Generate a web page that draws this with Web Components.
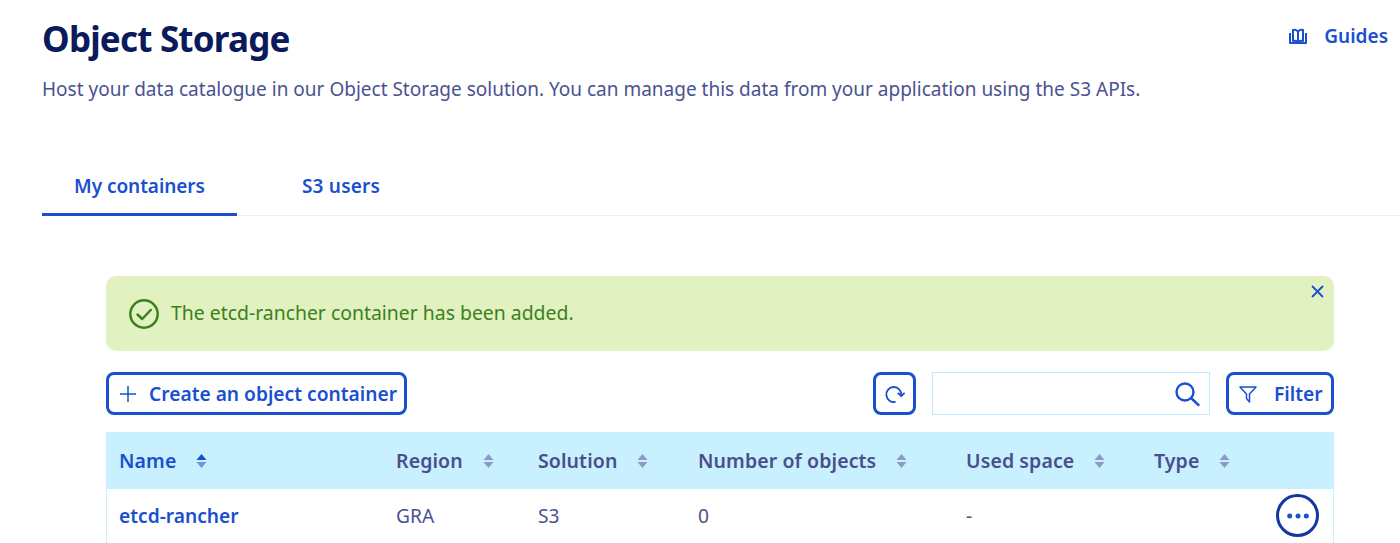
<!DOCTYPE html>
<html lang="en">
<head>
<meta charset="utf-8">
<title>Object Storage</title>
<style>
  html, body { margin: 0; height: 543px; overflow: hidden; background: #fff; }
  body { font-family: "Noto Sans", "Open Sans", sans-serif; color: #4d5693; }
</style>
</head>
<body>
<page-header heading="Object Storage">Host your data catalogue in our Object Storage solution. You can manage this data from your application using the S3 APIs.</page-header>
<tab-bar></tab-bar>
<main-panel>
  <success-message>The etcd-rancher container has been added.</success-message>
  <container-toolbar></container-toolbar>
  <container-table></container-table>
</main-panel>

<script>
const BLUE = '#1a4fd0';

class PageHeader extends HTMLElement {
  constructor() {
    super();
    this.shadowDOM = this.attachShadow({ mode: 'open' });
  }

  connectedCallback() {
    this.shadowDOM.innerHTML = `
      <style>
        :host { display: block; padding: 14px 12px 0 42px; height: 102px; box-sizing: border-box; }
        .top { display: flex; justify-content: space-between; align-items: flex-start; height: 49px; }
        h1 { margin: 0; font-size: 35px; line-height: 49px; font-weight: 700; color: #0a1a5c; letter-spacing: -0.8px; }
        a { display: flex; align-items: center; gap: 17px; color: ${BLUE}; font-size: 19px; font-weight: 600; line-height: 44px; }
        svg { width: 18px; height: 16px; }
        p { margin: 13px 0 0; font-size: 19px; line-height: 26px; color: #4a5290; }
      </style>
      <div class="top">
        <h1>${this.getAttribute('heading')}</h1>
        <a>
          <svg viewBox="0 0 18 16" fill="none" stroke="${BLUE}" stroke-width="2" stroke-linejoin="round">
            <path d="M1 5v10h16V5"/>
            <path d="M4 2c1.800-.6 3.400 0 5 1.500C10.600 2 12.200 1.400 14 2v11c-1.800-.4-3.400 0-5 1-1.600-1-3.200-1.400-5-1z"/>
            <path d="M9 3.500V14"/>
          </svg>
          Guides
        </a>
      </div>
      <p><slot></slot></p>`;
  }
}
customElements.define('page-header', PageHeader);

class TabBar extends HTMLElement {
  constructor() {
    super();
    this.shadowDOM = this.attachShadow({ mode: 'open' });
  }

  connectedCallback() {
    this.shadowDOM.innerHTML = `
      <style>
        :host { display: flex; margin: 54px 0 0 42px; height: 60px; box-sizing: border-box; border-bottom: 1px solid #e3f3fb; }
        div { box-sizing: border-box; height: 60px; padding-top: 17px; font-size: 19px; line-height: 26px; font-weight: 600; color: ${BLUE}; text-align: center; }
        .on { width: 195px; border-bottom: 3px solid ${BLUE}; letter-spacing: -0.05px; }
        .off { width: 208px; letter-spacing: 0.2px; }
      </style>
      <div class="on">My containers</div>
      <div class="off">S3 users</div>`;
  }
}
customElements.define('tab-bar', TabBar);

class MainPanel extends HTMLElement {
  constructor() {
    super();
    this.attachShadow({ mode: 'open' }).innerHTML = `
      <style>
        :host { display: flex; flex-direction: column; margin: 60px 66px 0 106px; }
      </style>
      <slot></slot>`;
  }
}
customElements.define('main-panel', MainPanel);

class SuccessMessage extends HTMLElement {
  constructor() {
    super();
    this.attachShadow({ mode: 'open' }).innerHTML = `
      <style>
        :host { display: flex; align-items: center; gap: 12px; position: relative; box-sizing: border-box; height: 75px; padding: 0 0 2px 23px; border-radius: 10px; background: #e1f1c0; color: #3d8020; font-size: 19.4px; }
        svg.ok { width: 30px; height: 30px; flex: none; margin-top: 2px; }
        svg.close { position: absolute; top: 9px; right: 10px; width: 13px; height: 13px; }
      </style>
      <svg class="ok" viewBox="0 0 30 30" fill="none" stroke="#3d8020">
        <circle cx="15" cy="15" r="13.700" stroke-width="2.500"/>
        <path d="M8.500 15.500l4.700 4.500 8.500-9" stroke-width="2.500" stroke-linecap="round" stroke-linejoin="round"/>
      </svg>
      <span><slot></slot></span>
      <svg class="close" viewBox="0 0 13 13" fill="none" stroke="${BLUE}" stroke-width="1.800">
        <path d="M1 1l11 11M12 1L1 12"/>
      </svg>`;
  }
}
customElements.define('success-message', SuccessMessage);

class ContainerToolbar extends HTMLElement {
  constructor() {
    super();
    this.attachShadow({ mode: 'open' }).innerHTML = `
      <style>
        :host { display: flex; align-items: stretch; height: 43px; margin-top: 21px; }
        .btn { display: flex; align-items: center; box-sizing: border-box; border: 3px solid ${BLUE}; border-radius: 8px; color: ${BLUE}; font-size: 19.200px; font-weight: 600; background: #fff; }
        .create { width: 301px; padding-left: 11px; gap: 13px; margin-right: auto; white-space: nowrap; }
        .refresh { width: 43px; justify-content: center; margin-right: 16px; }
        .search { display: flex; align-items: center; justify-content: flex-end; box-sizing: border-box; width: 278px; border: 1px solid #bdeafd; padding-right: 9px; margin-right: 16px; }
        .filter { width: 108px; padding-left: 10px; gap: 17px; }
      </style>
      <div class="btn create">
        <svg width="16" height="16" viewBox="0 0 16 16" stroke="${BLUE}" stroke-width="1.500"><path d="M8 0v16M0 8h16"/></svg>
        Create an object container
      </div>
      <div class="btn refresh">
        <svg width="20" height="20" viewBox="0 0 20 20" fill="none" stroke="${BLUE}" stroke-width="1.800">
          <path d="M10.500 17.800A7.500 7.500 0 1 1 16.300 11"/>
          <path d="M12.800 8.800l3.400 3.400 3.400-3.400" stroke-linejoin="round"/>
        </svg>
      </div>
      <div class="search">
        <svg width="26" height="26" viewBox="0 0 26 26" fill="none" stroke="${BLUE}" stroke-width="2.400">
          <circle cx="11" cy="11" r="8.500"/>
          <path d="M17 17l7.500 7" stroke-linecap="round"/>
        </svg>
      </div>
      <div class="btn filter">
        <svg width="18" height="20" viewBox="0 0 18 20" fill="none" stroke="${BLUE}" stroke-width="1.500" stroke-linejoin="round">
          <path d="M1 3h16l-6.500 7v8L7.500 14.500V10z"/>
        </svg>
        Filter
      </div>`;
  }
}
customElements.define('container-toolbar', ContainerToolbar);

class SortIcon extends HTMLElement {
  constructor() {
    super();
    const top = this.hasAttribute('active') ? '#1a4fd0' : '#8d9ac4';
    const bottom = this.hasAttribute('active') ? '#6f93e0' : '#8d9ac4';
    this.attachShadow({ mode: 'open' }).innerHTML = `
      <style>
        :host { display: inline-flex; margin-left: 20px; }
      </style>
      <svg width="11" height="16" viewBox="0 0 11 16">
        <path d="M5.500 1L10.500 7H.5z" fill="${top}"/>
        <path d="M5.500 15L10.500 9H.5z" fill="${bottom}"/>
      </svg>`;
  }
}
customElements.define('sort-icon', SortIcon);

class ContainerTable extends HTMLElement {
  constructor() {
    super();
    this.shadowDOM = this.attachShadow({ mode: 'open' });
  }

  connectedCallback() {
    const heads = ['Name', 'Region', 'Solution', 'Number of objects', 'Used space', 'Type'];
    const cells = ['etcd-rancher', 'GRA', 'S3', '0', '-', ''];
    this.shadowDOM.innerHTML = `
      <style>
        :host { display: block; margin-top: 17px; height: 111px; box-sizing: border-box; border-left: 1px solid #c8f0ff; border-right: 1px solid #c8f0ff; }
        .row { display: grid; grid-template-columns: 277px 142px 160px 268px 188px 1fr; margin: 0 -1px; padding-left: 13px; font-size: 19.200px; }
        .head { height: 57px; background: #c8f0ff; align-items: center; font-weight: 600; color: #4a4f8c; font-size: 19.500px; letter-spacing: 0.1px; }
        .head span:first-child, .body span:first-child { color: ${BLUE}; }
        .body { height: 54px; padding-bottom: 2px; box-sizing: border-box; align-items: center; color: #4a5290; position: relative; }
        .body span:first-child { font-weight: 600; }
        .head span { display: flex; align-items: center; }
        button { position: absolute; right: 15px; top: 5px; width: 43px; height: 43px; box-sizing: border-box; padding: 0; border: 3px solid #14379f; border-radius: 50%; background: #fff; display: flex; align-items: center; justify-content: center; }
      </style>
      <div class="row head">
        ${heads.map((h, i) => `<span>${h}<sort-icon ${i === 0 ? 'active' : ''}></sort-icon></span>`).join('')}
      </div>
      <div class="row body">
        ${cells.map(c => `<span>${c}</span>`).join('')}
        <button aria-label="Actions">
          <svg width="22" height="6" viewBox="0 0 22 6" fill="${BLUE}"><circle cx="2.700" cy="3" r="2.500"/><circle cx="11" cy="3" r="2.500"/><circle cx="19.300" cy="3" r="2.500"/></svg>
        </button>
      </div>`;
  }
}
customElements.define('container-table', ContainerTable);
</script>
</body>
</html>
